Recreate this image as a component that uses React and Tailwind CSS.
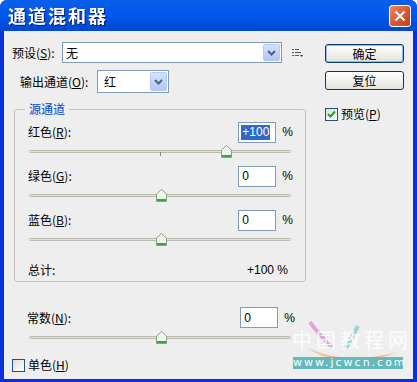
import React, { useState } from 'react';

const cjk = { fontFamily: '"Noto Sans CJK SC", "Noto Sans", sans-serif' };

const U = ({ children }) => <span className="underline underline-offset-1">{children}</span>;

const ComboArrow = () => (
    <div className="w-[17px] h-full rounded-[2px] border border-[#b6c8f4] bg-gradient-to-b from-[#d6e2fd] to-[#b2c6f6] flex items-center justify-center">
        <svg width="9" height="6" viewBox="0 0 9 6">
            <path d="M1 1 L4.5 4.5 L8 1" stroke="#4d6185" strokeWidth="2" fill="none" />
        </svg>
    </div>
)

const NumBox = ({ value, selected }) => (
    <div className="flex items-center">
        <div className="w-[38px] h-[21px] border border-[#7f9db9] bg-white flex items-center pl-[2px] text-[12px] text-black" style={{ fontFamily: '"Liberation Sans", sans-serif' }}>
            {selected ? <span className="bg-[#316ac5] text-white px-[1px] leading-[15px]">{value}</span> : <span className="pl-[1px]">{value}</span>}
        </div>
        <span className="ml-[6px] text-[12px]" style={{ fontFamily: '"Liberation Sans", sans-serif' }}>%</span>
    </div>
)

const Thumb = () => (
    <svg width="11" height="13" viewBox="0 0 11 13">
        <path d="M0.5 5 L5.5 0.5 L10.5 5 L10.5 12.5 L0.5 12.5 Z" fill="#eef7ea" stroke="#8aa08a" />
        <path d="M1 11 L10 11" stroke="#3fa04a" strokeWidth="2" />
    </svg>
)

const Slider = ({ pos, tick }) => (
    <div className="relative h-[13px] w-[262px]">
        <div className="absolute left-0 right-0 top-[5px] h-[3px] rounded-full border border-[#b9b9b0] bg-[#e4e4de]" />
        {tick && <div className="absolute top-[7px] w-px h-[4px] bg-[#8c8c86]" style={{ left: 131 }} />}
        <div className="absolute top-0" style={{ left: pos - 5 }}><Thumb /></div>
    </div>
)

const Channel = ({ label, value, selected, pos, tick }) => (
    <div className="h-[44px]">
        <div className="h-[20px] flex items-center justify-between pr-[12px]">
            <span className="text-[12px] pl-[13px]">{label}</span>
            <NumBox value={value} selected={selected} />
        </div>
        <div className="pl-[14px] pt-[3px]">
            <Slider pos={pos} tick={tick} />
        </div>
    </div>
)

const CheckBox = ({ checked }) => (
    <div className="w-[13px] h-[13px] border border-[#1c5180] bg-gradient-to-br from-[#dcdcd7] to-white flex items-center justify-center">
        {checked && (
            <svg width="9" height="9" viewBox="0 0 9 9">
                <path d="M1 4 L3.5 6.5 L8 1.5" stroke="#21a121" strokeWidth="2" fill="none" />
            </svg>
        )}
    </div>
)

const XpButton = ({ children, focus }) => (
    <button className={`w-[79px] h-[19px] rounded-[3px] border border-[#003c74] text-[12px] flex items-center justify-center bg-gradient-to-b from-white to-[#e3e3db] ${focus ? 'shadow-[inset_0_0_0_1px_#98b8ea]' : ''}`}>
        {children}
    </button>
)

const App = () => {
    const [preview] = useState(true);

    return (
        <div className="w-[417px] h-[382px] flex flex-col bg-[#0831d9] rounded-t-[7px] overflow-hidden relative" style={cjk}>
            {/* title bar */}
            <div className="h-[31px] shrink-0 flex items-center justify-between pl-[8px] pr-[6px] bg-gradient-to-b from-[#0a5ee9] via-[#0058ec] to-[#0047d3]">
                <span className="text-white font-bold text-[18px] tracking-[2px] drop-shadow-[1px_1px_0_#0a1e70]">通道混和器</span>
                <div className="w-[22px] h-[22px] rounded-[3px] border border-white bg-gradient-to-br from-[#e8896a] via-[#d95b33] to-[#c0401c] flex items-center justify-center">
                    <svg width="12" height="12" viewBox="0 0 12 12">
                        <path d="M1.5 1.5 L10.5 10.5 M10.5 1.5 L1.5 10.5" stroke="white" strokeWidth="2.2" />
                    </svg>
                </div>
            </div>

            {/* body */}
            <div className="flex-1 mx-[4px] mb-[3px] bg-[#eeeeee] flex text-black">
                <div className="w-[301px] pl-[8px] pt-[11px]">
                    <div className="flex items-center h-[21px]">
                        <span className="text-[12px] w-[50px]">预设(<U>S</U>):</span>
                        <div className="w-[220px] h-[21px] border border-[#7f9db9] bg-white flex items-center justify-between p-px">
                            <span className="text-[12px] pl-[2px]">无</span>
                            <ComboArrow />
                        </div>
                        <svg className="ml-[10px]" width="12" height="10" viewBox="0 0 12 10">
                            <path d="M0 1.5h2M0 4.5h2M0 7.5h2M3 1.5h4M3 4.5h6M3 7.5h4" stroke="#555" strokeWidth="1" />
                            <path d="M8 7 L11 7 L9.5 9 Z" fill="#333" />
                        </svg>
                    </div>

                    <div className="flex items-center h-[23px] mt-[7px] pl-[8px]">
                        <span className="text-[12px] w-[77px]">输出通道(<U>O</U>):</span>
                        <div className="w-[72px] h-[23px] border border-[#7f9db9] bg-white flex items-center justify-between p-px">
                            <span className="text-[12px] pl-[5px]">红</span>
                            <ComboArrow />
                        </div>
                    </div>

                    <fieldset className="ml-[2px] mt-[10px] w-[292px] h-[179px] border border-[#c5c5bd] rounded-[3px] pt-[7px]">
                        <legend className="ml-[10px] px-[4px] text-[12px] text-[#0046d5] leading-[12px]">源通道</legend>
                        <Channel label={<>红色(<U>R</U>):</>} value="+100" selected pos={197} tick />
                        <Channel label={<>绿色(<U>G</U>):</>} value="0" pos={132} />
                        <Channel label={<>蓝色(<U>B</U>):</>} value="0" pos={132} />
                        <div className="flex items-center justify-between pr-[17px] mt-[7px] text-[12px]">
                            <span className="pl-[13px]">总计:</span>
                            <span style={{ fontFamily: '"Liberation Sans", sans-serif' }}>+100 %</span>
                        </div>
                    </fieldset>

                    <div className="mt-[25px] pl-[2px]">
                        <div className="h-[21px] flex items-center justify-between pr-[10px]">
                            <span className="text-[12px] pl-[13px]">常数(<U>N</U>):</span>
                            <NumBox value="0" />
                        </div>
                        <div className="pl-[15px] pt-[3px]">
                            <Slider pos={132} />
                        </div>
                    </div>

                    <div className="flex items-center mt-[12px] gap-[3px]">
                        <CheckBox />
                        <span className="text-[12px]">单色(<U>H</U>)</span>
                    </div>
                </div>

                <div className="flex flex-col pl-[20px] pt-[13px]">
                    <XpButton focus>确定</XpButton>
                    <div className="h-[8px]" />
                    <XpButton>复位</XpButton>
                    <div className="flex items-center gap-[3px] mt-[15px]">
                        <CheckBox checked={preview} />
                        <span className="text-[12px]">预览(<U>P</U>)</span>
                    </div>
                </div>
            </div>

            {/* watermark */}
            <div className="absolute left-[288px] top-[318px] w-[124px] h-[56px] pointer-events-none">
                <svg className="absolute left-0 top-0" width="124" height="46" viewBox="0 0 124 46">
                    <path d="M22 4 C30 16 38 22 44 30" stroke="#d58fcb" strokeWidth="4" fill="none" opacity="0.75" />
                    <path d="M70 8 C66 16 62 22 58 30" stroke="#7cc9cc" strokeWidth="4" fill="none" opacity="0.75" />
                    <path d="M20 30 C40 40 70 44 110 34 C80 46 40 46 20 30 Z" fill="#f0b27a" opacity="0.75" />
                </svg>
                <div className="absolute left-[4px] top-[10px] text-[20px] text-white/80 tracking-[4px] leading-[24px] whitespace-nowrap">中国教程网</div>
                <div className="absolute left-[5px] top-[39px] w-[110px] h-[12px] bg-[#64b9bd] text-white text-[11px] leading-[12px] tracking-[2px] text-center whitespace-nowrap" style={{ fontFamily: '"DejaVu Sans", sans-serif' }}>www.jcwcn.com</div>
            </div>
        </div>
    )
}

export default App;
